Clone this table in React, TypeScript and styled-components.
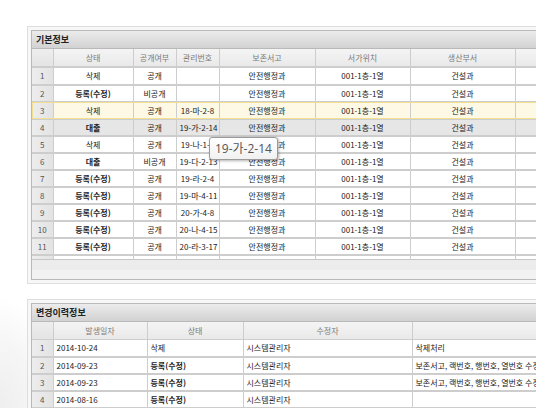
import React from "react";
import styled, { createGlobalStyle, css } from "styled-components";

const Global = createGlobalStyle`
  html, body { margin: 0; padding: 0; width: 536px; height: 408px; overflow: hidden; }
  body {
    background: radial-gradient(ellipse 60px 110px at 0 100%, #eeeeee 0%, #f6f6f6 60%, #ffffff 100%);
    font-family: "Noto Sans CJK KR", "Noto Sans", sans-serif;
  }
`;

const Page = styled.div`
  padding: 26px 0 0 27px;
  display: flex;
  flex-direction: column;
  gap: 15px;
`;

const Frame = styled.div`
  width: 600px;
  border: 1px solid #dedede;
  background: #f7f7f7;
  padding: 3px;
`;

const Panel = styled.div`
  border: 1px solid #b9b9b9;
  background: #fff;
  position: relative;
`;

const TitleBar = styled.div`
  height: 18px;
  line-height: 18px;
  padding-left: 4px;
  font-size: 9px;
  font-weight: bold;
  color: #222;
  background: linear-gradient(#ececec, #d2d2d2);
  border-bottom: 1px solid #b9b9b9;
  box-sizing: border-box;
`;

const Body = styled.div<{ $h?: number }>`
  overflow: hidden;
  ${(p) => p.$h !== undefined && css`height: ${p.$h}px;`}
`;

const Table = styled.table`
  border-collapse: collapse;
  table-layout: fixed;
  font-size: 8px;
  color: #222;
`;

const Th = styled.th`
  height: 17px;
  padding: 0;
  font-weight: normal;
  color: #7a7a7a;
  background: linear-gradient(#f4f4f4, #e9e9e9);
  border: 1px solid #cdcdcd;
  border-top: none;
  text-align: center;
  white-space: nowrap;
  overflow: hidden;
`;

const Tr = styled.tr<{ $mode?: "hover" | "sel" }>`
  height: 17px;
  background: ${(p) => (p.$mode === "hover" ? "#fdf9e4" : p.$mode === "sel" ? "#e6e6e6" : "#ffffff")};
  ${(p) =>
    p.$mode === "hover" &&
    css`
      outline: 1px solid #f1df94;
      outline-offset: -1px;
    `}
`;

const Td = styled.td<{ $left?: boolean; $strong?: boolean }>`
  padding: 0 3px;
  border: 1px solid #cdcdcd;
  border-width: 1px 1px 2px 1px;
  text-align: ${(p) => (p.$left ? "left" : "center")};
  white-space: nowrap;
  overflow: hidden;
  font-weight: ${(p) => (p.$strong ? 600 : 400)};
`;

const Num = styled.td`
  padding: 0;
  border: 1px solid #cdcdcd;
  border-width: 1px 1px 2px 0;
  text-align: center;
  color: #555;
  background: linear-gradient(90deg, #ededed, #e3e3e3);
`;

const NumTh = styled(Th)`
  border-left: none;
  background: linear-gradient(#eeeeee, #e4e4e4);
`;

const Footer = styled.div`
  height: 20px;
  border-top: 1px solid #c6c6c6;
  background: linear-gradient(#ececec 0 10px, #f2f2f2 10px);
  box-sizing: border-box;
`;

const Tip = styled.div`
  position: absolute;
  left: 177px;
  top: 106px;
  padding: 1px 5px 2px;
  font-family: "Open Sans", "Noto Sans CJK KR", sans-serif;
  font-size: 12px;
  color: #555;
  background: linear-gradient(#ffffff, #f1f1f1);
  border: 1px solid #9a9a9a;
  border-radius: 3px;
  box-shadow: 1px 1px 3px rgba(0, 0, 0, 0.3);
  white-space: nowrap;
`;

const cols1 = [21, 80, 43, 43, 96, 95, 105, 100];
const head1 = ["", "상태", "공개여부", "관리번호", "보존서고", "서가위치", "생산부서", "생산년도"];

type R1 = [string, string, string];
const rows1: R1[] = [
  ["삭제", "공개", ""],
  ["등록(수정)", "비공개", ""],
  ["삭제", "공개", "18-마-2-8"],
  ["대출", "공개", "19-가-2-14"],
  ["삭제", "공개", "19-나-1-7"],
  ["대출", "비공개", "19-다-2-13"],
  ["등록(수정)", "공개", "19-라-2-4"],
  ["등록(수정)", "공개", "19-마-4-11"],
  ["등록(수정)", "공개", "20-가-4-8"],
  ["등록(수정)", "공개", "20-나-4-15"],
  ["등록(수정)", "공개", "20-라-3-17"],
  ["등록(수정)", "비공개", "20-마-3-18"],
];

const cols2 = [21, 94, 96, 169, 300];
const head2 = ["", "발생일자", "상태", "수정자", "수정내용"];
const rows2 = [
  ["2014-10-24", "삭제", "시스템관리자", "삭제처리"],
  ["2014-09-23", "등록(수정)", "시스템관리자", "보존서고, 랙번호, 행번호, 열번호 수정"],
  ["2014-09-23", "등록(수정)", "시스템관리자", "보존서고, 랙번호, 행번호, 열번호 수정"],
  ["2014-08-16", "등록(수정)", "시스템관리자", ""],
];

const Cols = ({ w }: { w: number[] }) => (
  <colgroup>
    {w.map((x, i) => (
      <col key={i} style={{ width: x }} />
    ))}
  </colgroup>
);

export default function App() {
  return (
    <>
      <Global />
      <Page>
        <Frame>
          <Panel>
            <TitleBar>기본정보</TitleBar>
            <Table style={{ width: cols1.reduce((a, b) => a + b, 0) }}>
              <Cols w={cols1} />
              <thead>
                <tr>
                  {head1.map((h, i) => (i === 0 ? <NumTh key={i} /> : <Th key={i}>{h}</Th>))}
                </tr>
              </thead>
            </Table>
            <Body $h={192}>
              <Table style={{ width: cols1.reduce((a, b) => a + b, 0) }}>
                <Cols w={cols1} />
                <tbody>
                  {rows1.map((r, i) => (
                    <Tr key={i} $mode={i === 2 ? "hover" : i === 3 ? "sel" : undefined}>
                      <Num>{i + 1}</Num>
                      <Td $strong={r[0] !== "삭제"}>{r[0]}</Td>
                      <Td>{r[1]}</Td>
                      <Td>{r[2]}</Td>
                      <Td>안전행정과</Td>
                      <Td>001-1층-1열</Td>
                      <Td>건설과</Td>
                      <Td></Td>
                    </Tr>
                  ))}
                </tbody>
              </Table>
            </Body>
            <Footer />
            <Tip>19-가-2-14</Tip>
          </Panel>
        </Frame>
        <Frame>
          <Panel>
            <TitleBar>변경이력정보</TitleBar>
            <Body>
              <Table style={{ width: cols2.reduce((a, b) => a + b, 0) }}>
                <Cols w={cols2} />
                <thead>
                  <tr>
                    {head2.map((h, i) => (i === 0 ? <NumTh key={i} /> : <Th key={i}>{h}</Th>))}
                  </tr>
                </thead>
                <tbody>
                  {rows2.map((r, i) => (
                    <Tr key={i}>
                      <Num>{i + 1}</Num>
                      {r.map((c, j) => (
                        <Td key={j} $left $strong={j === 1 && c !== "삭제"}>
                          {c}
                        </Td>
                      ))}
                    </Tr>
                  ))}
                </tbody>
              </Table>
            </Body>
          </Panel>
        </Frame>
      </Page>
    </>
  );
}
